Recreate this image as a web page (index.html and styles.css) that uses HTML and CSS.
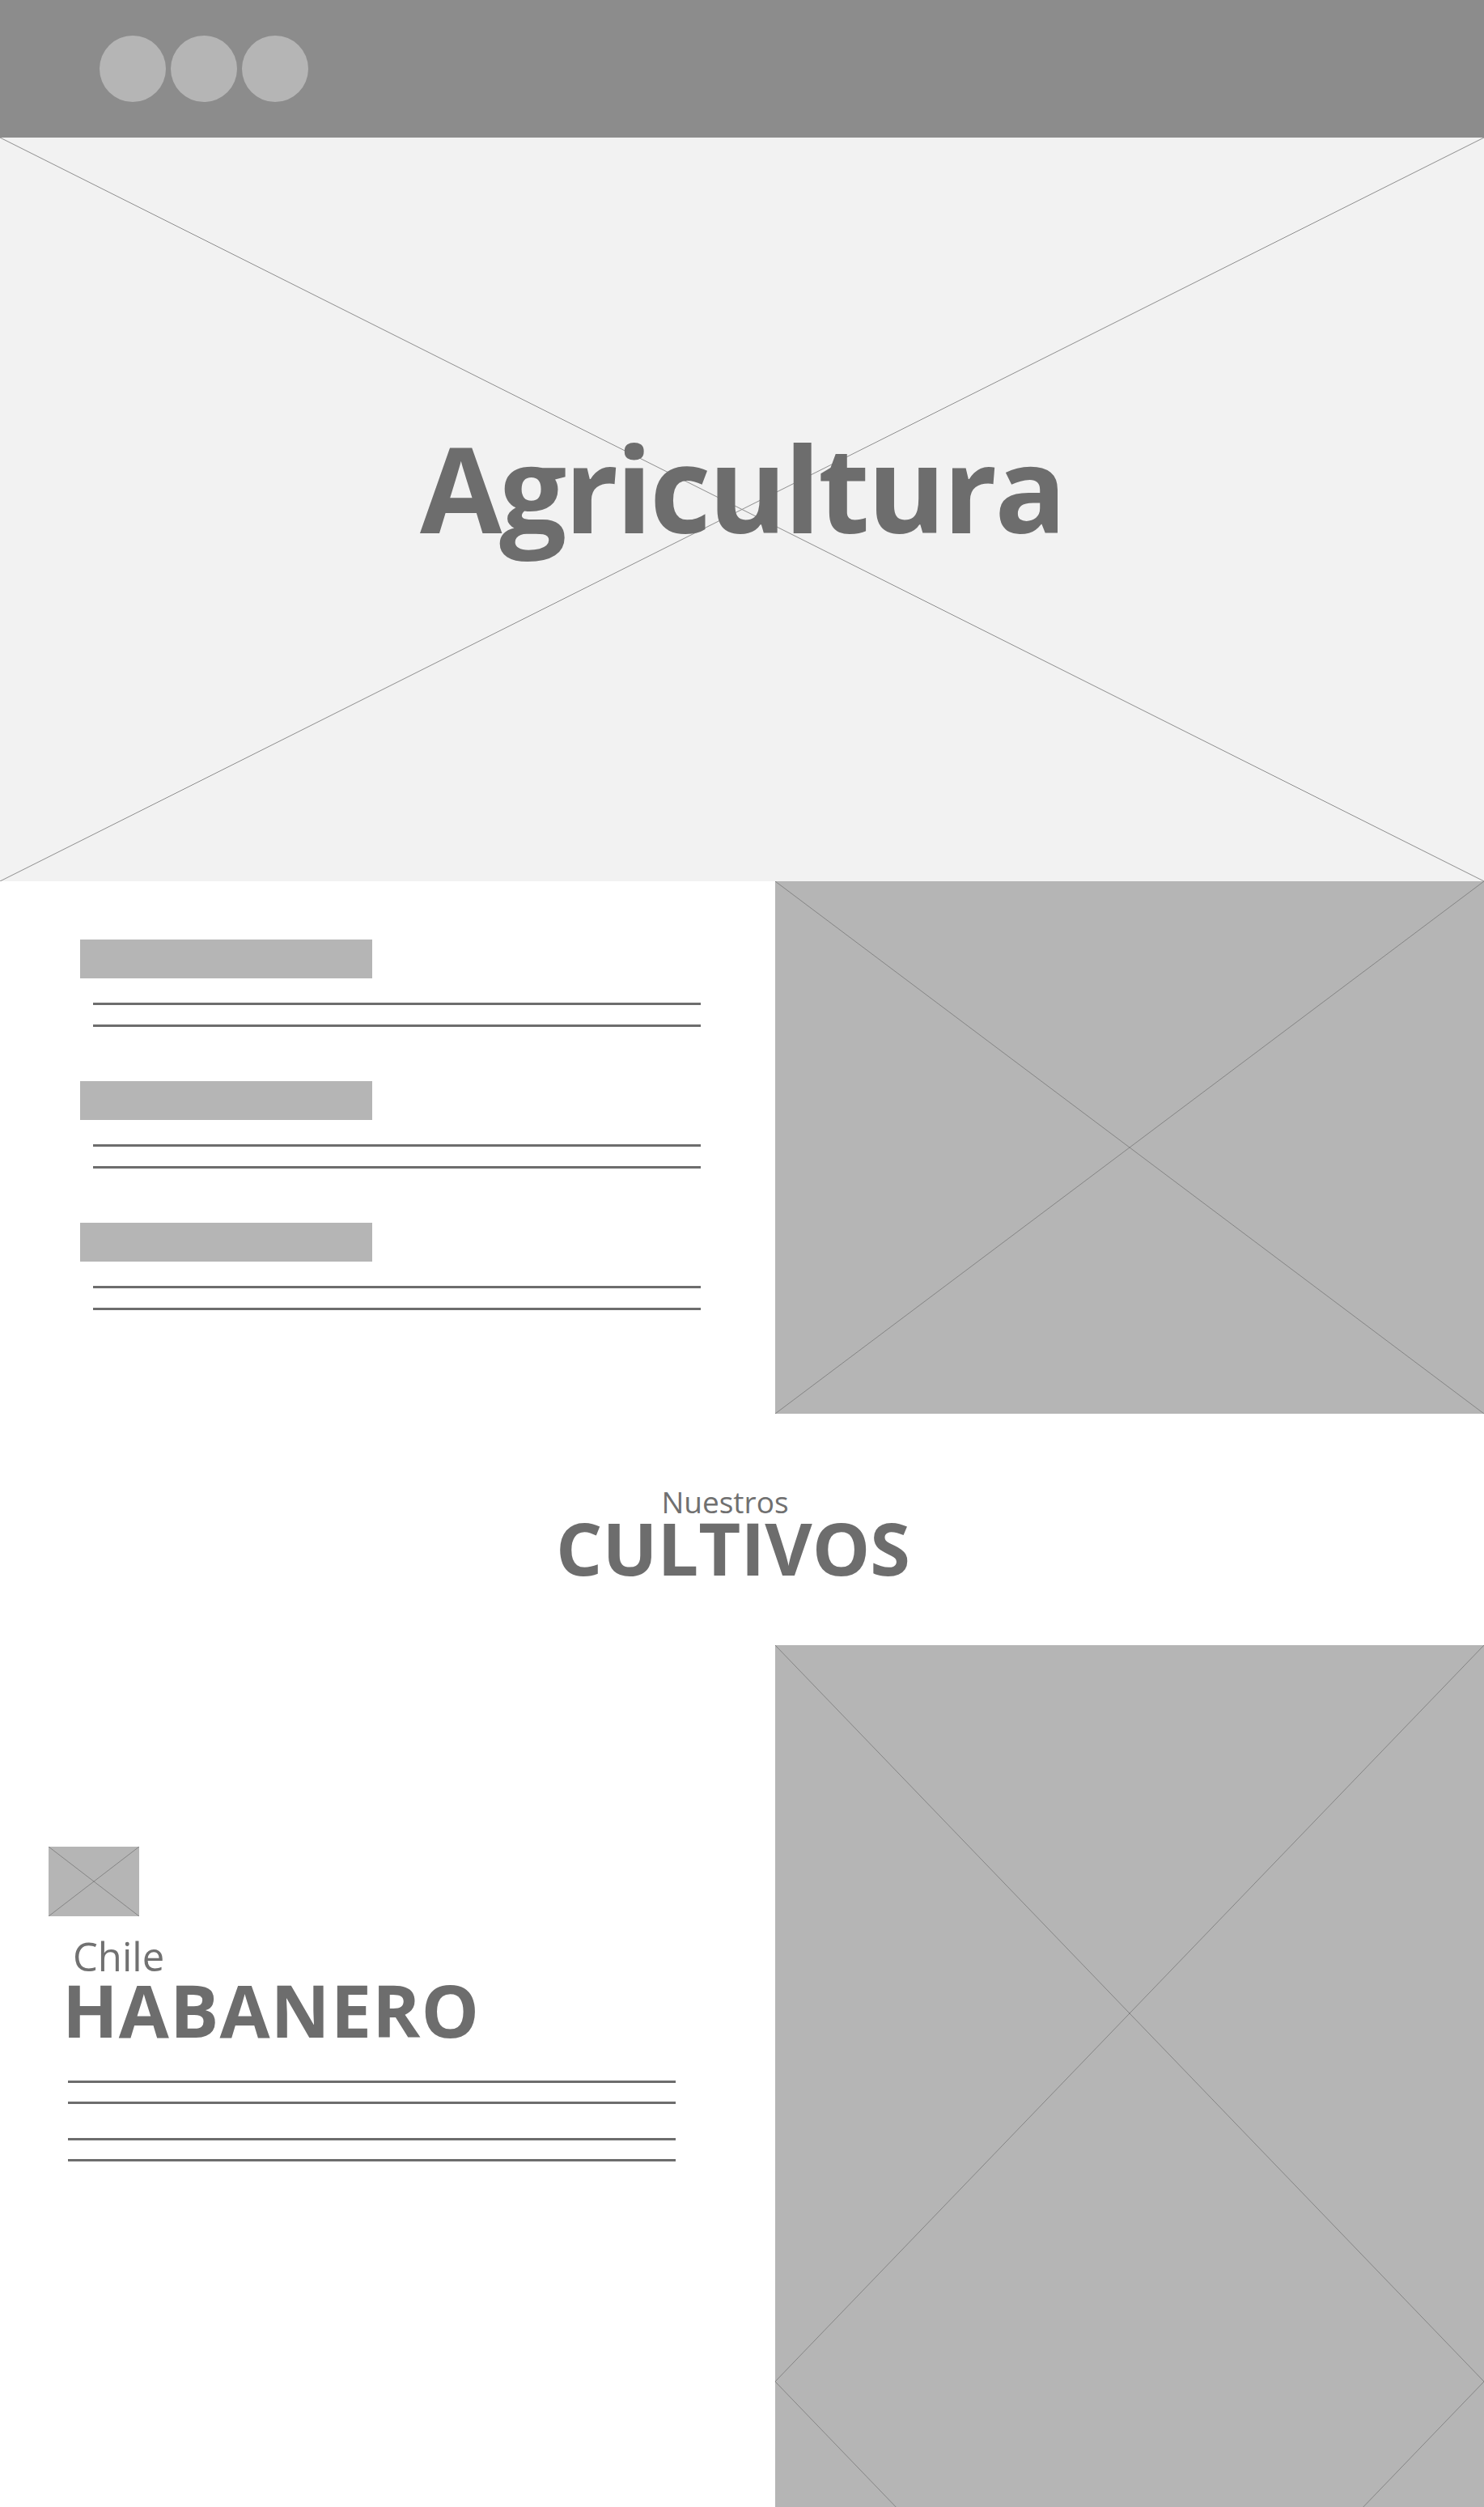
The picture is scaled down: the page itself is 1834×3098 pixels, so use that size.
FILE: index.html
```html
<!DOCTYPE html>
<html lang="es">
<head>
<meta charset="utf-8">
<title>Agricultura</title>
<link rel="stylesheet" href="styles.css">
</head>
<body>
<header class="topbar">
  <span class="dot"></span><span class="dot"></span><span class="dot"></span>
</header>

<section class="hero">
  <svg class="hero-x" viewBox="0 0 100 100" preserveAspectRatio="none" aria-hidden="true">
    <line x1="0" y1="0" x2="100" y2="100" vector-effect="non-scaling-stroke"/>
    <line x1="100" y1="0" x2="0" y2="100" vector-effect="non-scaling-stroke"/>
  </svg>
  <h1 class="hero-title">Agricultura</h1>
</section>

<section class="features">
  <div class="feature-list">
    <div class="feature">
      <div class="feature-bar"></div>
      <div class="rule rule-first"></div>
      <div class="rule"></div>
    </div>
    <div class="feature">
      <div class="feature-bar"></div>
      <div class="rule rule-first"></div>
      <div class="rule"></div>
    </div>
    <div class="feature">
      <div class="feature-bar"></div>
      <div class="rule rule-first"></div>
      <div class="rule"></div>
    </div>
  </div>
  <div class="feature-media">
    <svg class="ph" viewBox="0 0 100 100" preserveAspectRatio="none" aria-hidden="true">
      <line x1="0" y1="0" x2="100" y2="100" vector-effect="non-scaling-stroke"/>
      <line x1="100" y1="0" x2="0" y2="100" vector-effect="non-scaling-stroke"/>
    </svg>
  </div>
</section>

<section class="section-title">
  <div class="kicker">Nuestros</div>
  <h2 class="big">CULTIVOS</h2>
</section>

<section class="crop">
  <div class="crop-info">
    <div class="crop-icon">
      <svg class="ph" viewBox="0 0 100 100" preserveAspectRatio="none" aria-hidden="true">
        <line x1="0" y1="0" x2="100" y2="100" vector-effect="non-scaling-stroke"/>
        <line x1="100" y1="0" x2="0" y2="100" vector-effect="non-scaling-stroke"/>
      </svg>
    </div>
    <div class="crop-sub">Chile</div>
    <h3 class="crop-name">HABANERO</h3>
    <div class="crop-rules">
      <div class="rule2"></div>
      <div class="rule2 r-near"></div>
      <div class="rule2 r-far"></div>
      <div class="rule2 r-near"></div>
    </div>
  </div>
  <div class="crop-media">
    <div class="crop-ph">
      <svg class="ph" viewBox="0 0 100 100" preserveAspectRatio="none" aria-hidden="true">
        <line x1="0" y1="0" x2="100" y2="100" vector-effect="non-scaling-stroke"/>
        <line x1="100" y1="0" x2="0" y2="100" vector-effect="non-scaling-stroke"/>
      </svg>
    </div>
    <div class="crop-ph">
      <svg class="ph" viewBox="0 0 100 100" preserveAspectRatio="none" aria-hidden="true">
        <line x1="0" y1="0" x2="100" y2="100" vector-effect="non-scaling-stroke"/>
        <line x1="100" y1="0" x2="0" y2="100" vector-effect="non-scaling-stroke"/>
      </svg>
    </div>
  </div>
</section>
</body>
</html>
```

FILE: styles.css
```css
* { box-sizing: border-box; }

html, body {
  margin: 0;
  padding: 0;
  background: #ffffff;
}

body {
  width: 1834px;
  font-family: "Open Sans", "Noto Sans", "DejaVu Sans", sans-serif;
  color: #6f6f6f;
  overflow: hidden;
}

h1, h2, h3 { margin: 0; font-weight: 700; }

/* top bar */
.topbar {
  height: 170px;
  background: #8c8c8c;
  display: flex;
  align-items: center;
  gap: 6px;
  padding-left: 123px;
}

.dot {
  width: 82px;
  height: 82px;
  border-radius: 50%;
  background: #b5b5b5;
}

/* hero */
.hero {
  position: relative;
  height: 919px;
  background: #f2f2f2;
  padding-top: 359px;
  text-align: center;
}

.hero-x {
  position: absolute;
  inset: 0;
  width: 100%;
  height: 100%;
}

.hero-x line {
  stroke: #8e8e8e;
  stroke-width: 1;
}

.hero-title {
  position: relative;
  font-size: 147px;
  line-height: 1;
  color: #6d6d6d;
  letter-spacing: -3px;
}

/* features */
.features {
  display: flex;
  height: 658px;
}

.feature-list {
  width: 958px;
  padding-top: 72px;
  padding-left: 99px;
  display: flex;
  flex-direction: column;
  gap: 67px;
}

.feature-bar {
  width: 361px;
  height: 48px;
  background: #b5b5b5;
}

.rule {
  width: 751px;
  height: 3px;
  margin-left: 16px;
  margin-top: 24px;
  background: #6d6d6d;
}

.rule-first { margin-top: 30px; }

.feature-media {
  width: 876px;
  height: 658px;
  background: #b5b5b5;
}

.ph {
  display: block;
  width: 100%;
  height: 100%;
  background: #b5b5b5;
}

.ph line {
  stroke: #858585;
  stroke-width: 1;
}

/* section title */
.section-title {
  height: 286px;
  padding-top: 96px;
  text-align: center;
  padding-right: 22px;
}

.kicker {
  font-size: 37px;
  line-height: 25px;
  font-weight: 400;
  margin-right: 20px;
  color: #707070;
}

.big {
  font-size: 90px;
  line-height: 70px;
  margin-top: 9px;
  color: #6d6d6d;
  letter-spacing: 0;
}

/* crop */
.crop {
  display: flex;
  align-items: flex-start;
}

.crop-info {
  width: 958px;
  padding-top: 249px;
}

.crop-icon {
  width: 112px;
  height: 86px;
  margin-left: 60px;
}

.crop-sub {
  font-size: 49px;
  line-height: 36px;
  font-weight: 400;
  margin-top: 31px;
  margin-left: 90px;
  color: #717171;
}

.crop-name {
  font-size: 90px;
  line-height: 68px;
  margin-top: 14px;
  margin-left: 77px;
  color: #6d6d6d;
  letter-spacing: 1px;
}

.crop-rules {
  margin-top: 54px;
  margin-left: 84px;
}

.rule2 {
  width: 751px;
  height: 3px;
  background: #6d6d6d;
}

.r-near { margin-top: 23px; }
.r-far { margin-top: 42px; }

.crop-media {
  width: 876px;
  display: flex;
  flex-direction: column;
}

.crop-ph {
  width: 876px;
  height: 910px;
}
```
